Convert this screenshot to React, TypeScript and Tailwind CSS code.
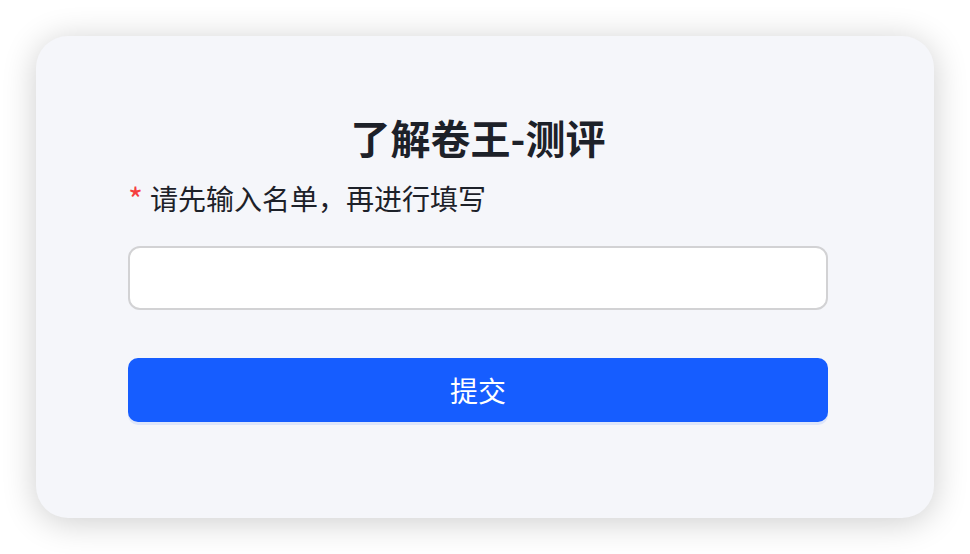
export default function App() {
  return (
    <div className="min-h-screen bg-white p-[36px] font-['Noto_Sans_CJK_SC','Noto_Sans',sans-serif]">
      <div className="flex h-[482px] w-[898px] flex-col rounded-[32px] bg-[#f5f6fa] pt-[73px] pr-[106px] pl-[92px] shadow-[0_4px_34px_rgba(0,0,0,0.2)]">
        <h1 className="text-center text-[40px] leading-[56px] font-bold text-[#1d2129]">
          了解卷王-测评
        </h1>
        <label className="mt-[13px] flex items-center text-[28px] leading-[40px] text-[#1d2129]">
          <span className="mr-[7px] text-[32px] text-[#f53f3f]">*</span>
          请先输入名单，再进行填写
        </label>
        <input
          type="text"
          className="mt-[28px] h-[64px] w-full rounded-[12px] border-2 border-[#d2d2d4] bg-white px-4 text-[24px] outline-none"
        />
        <button className="mt-[48px] h-[64px] w-full rounded-[10px] bg-[#165dff] text-[28px] text-white shadow-[0_3px_0_rgba(22,93,255,0.1)]">
          提交
        </button>
      </div>
    </div>
  );
}
